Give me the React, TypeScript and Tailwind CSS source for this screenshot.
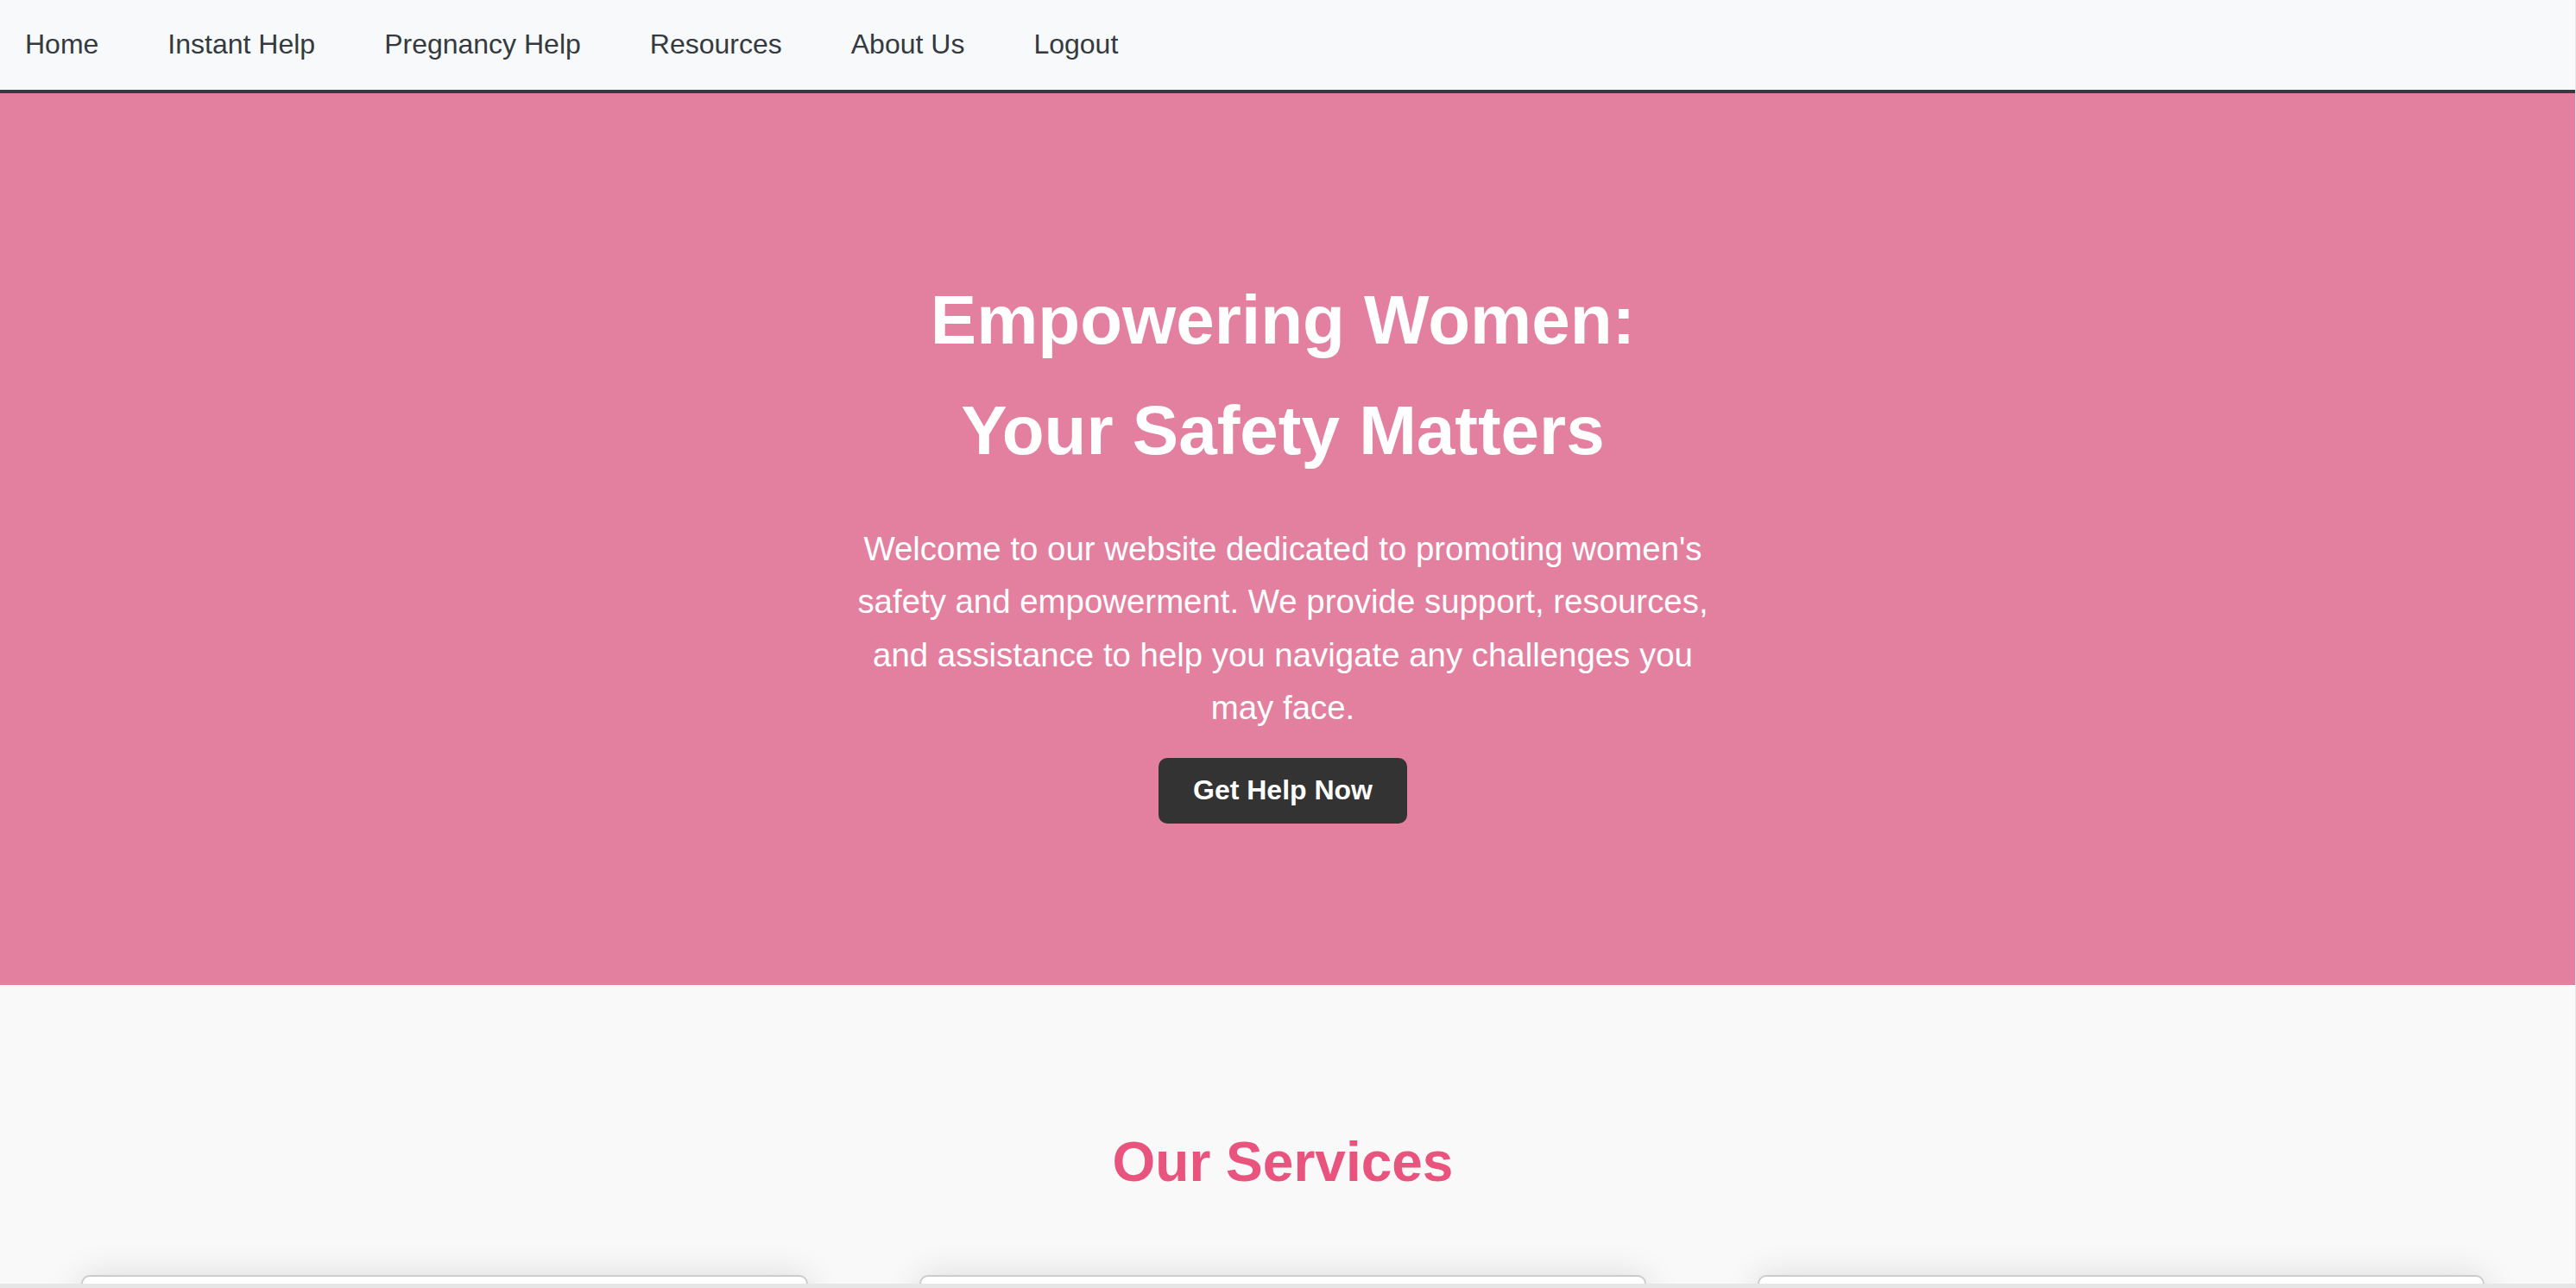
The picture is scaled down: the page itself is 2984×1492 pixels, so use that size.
import React from "react";

const navItems = ["Home", "Instant Help", "Pregnancy Help", "Resources", "About Us", "Logout"];

export default function App() {
  return (
    <div className="relative h-[1492px] w-full overflow-hidden bg-[#f9f9f9] font-['Liberation_Sans',Arial,Helvetica,sans-serif] leading-[1.6]">
      <nav className="flex h-[108px] items-start gap-[80px] border-b-4 border-[#343a40] bg-[#f8f9fa] pl-[29px] pt-[33px] text-[32px] leading-[1.15] text-[#343a40]">
        {navItems.map((item) => (
          <a key={item} href="#" className="whitespace-nowrap">
            {item}
          </a>
        ))}
      </nav>

      <section className="flex h-[1033px] flex-col items-center bg-[#e37f9f] pr-[12px] pt-[199px] text-white">
        <h1 className="text-center text-[80px] font-bold leading-[1.6]">
          Empowering Women:
          <br />
          Your Safety Matters
        </h1>
        <p className="mt-[42px] max-w-[1000px] text-center text-[38.4px] leading-[1.6]">
          Welcome to our website dedicated to promoting women's safety and empowerment. We provide support,
          resources, and assistance to help you navigate any challenges you may face.
        </p>
        <button className="mt-[27px] h-[76px] rounded-[10px] bg-[#333333] px-[40px] text-[32px] font-bold leading-[1.15] text-white">
          Get Help Now
        </button>
      </section>

      <section className="flex flex-col items-center pr-[12px] pt-[154px]">
        <h2 className="text-center text-[64px] font-bold leading-[1.6] text-[#e9547f]">Our Services</h2>
        <div className="mt-[80px] grid w-full grid-cols-3 gap-[129px] px-[94px]">
          {[0, 1, 2].map((i) => (
            <div
              key={i}
              className="h-[400px] rounded-[10px] border-2 border-[#cccccc] bg-white shadow-[0_0_40px_rgba(0,0,0,0.12)]"
            />
          ))}
        </div>
      </section>

      <div className="absolute bottom-0 left-0 right-0 h-[5px] bg-[#e6e6e6]" />
      <div className="absolute bottom-0 right-0 top-0 w-[1px] bg-[#e6e6e6]" />
    </div>
  );
}
